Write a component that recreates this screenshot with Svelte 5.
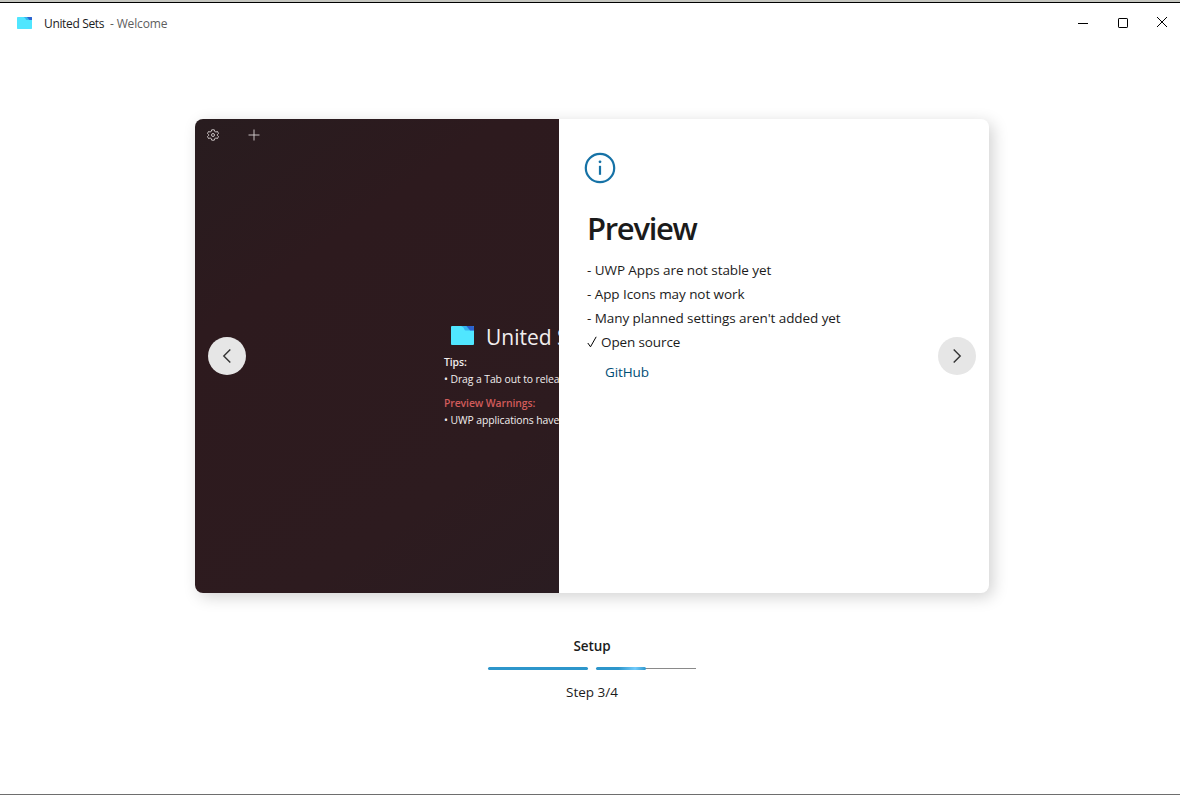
<script>
	let step = $state(3);
	const total = 4;

	const notes = [
		'- UWP Apps are not stable yet',
		'- App Icons may not work',
		"- Many planned settings aren't added yet"
	];

	const prev = () => {
		if (step > 1) step -= 1;
	};
	const next = () => {
		if (step < total) step += 1;
	};

	// two bars, each one covers half of the steps
	let bars = $derived([Math.min(step / 2, 1) * 100, Math.max((step - 2) / 2, 0) * 100]);
</script>

{#snippet folder(w, h)}
	<svg class="folder" width={w} height={h} viewBox="0 0 24 19" preserveAspectRatio="none">
		<rect width="24" height="19" rx="1" fill="#50e6ff" />
		<path d="M10.5 0H23a1 1 0 0 1 1 1v3.6h-8.5c-1.6 0-1.6-1.8-2.6-3z" fill="#35b4ef" />
		<path d="M16 0h7a1 1 0 0 1 1 1v3.6h-4z" fill="#2b63cf" />
	</svg>
{/snippet}

<div class="window">
	<header>
		{@render folder(15, 12)}
		<span class="app-name">United Sets</span>
		<span class="page-name">- Welcome</span>
		<div class="controls">
			<button aria-label="Minimize">
				<svg width="12" height="12"><path d="M1 6.5h10" /></svg>
			</button>
			<button aria-label="Maximize">
				<svg width="12" height="12"><rect x="1.5" y="1.5" width="9" height="9" rx="0.6" /></svg>
			</button>
			<button aria-label="Close">
				<svg width="12" height="12"><path d="M1 1l10 10M11 1L1 11" /></svg>
			</button>
		</div>
	</header>

	<main>
		<div class="card">
			<div class="shot">
				<div class="tabs">
					<svg width="12" height="12" viewBox="0 0 12 12">
						<path
							d="M4.7 0.8h2.6l.4 1.6 1.2.6 1.6-.5 1 2-1.2 1.1v.8l1.2 1.1-1 2-1.6-.5-1.2.6-.4 1.6H4.7l-.4-1.6-1.2-.6-1.6.5-1-2 1.2-1.1v-.8L.5 4.5l1-2 1.6.5 1.2-.6z"
						/>
						<circle cx="6" cy="6" r="1.5" />
					</svg>
					<svg width="12" height="12" viewBox="0 0 12 12"><path d="M6 .5v11M.5 6h11" /></svg>
				</div>
				<div class="shot-body">
					<div class="shot-title">
						{@render folder(23, 19)}
						<span>United Sets</span>
					</div>
					<p class="tips">Tips:</p>
					<p>• Drag a Tab out to release</p>
					<p class="warn">Preview Warnings:</p>
					<p>• UWP applications have issues</p>
				</div>
			</div>

			<div class="info">
				<svg class="info-icon" width="32" height="32" viewBox="0 0 32 32">
					<circle cx="16" cy="16" r="14.2" />
					<path d="M16 13.8v9" />
					<circle class="dot" cx="16" cy="9.8" r="1.4" />
				</svg>
				<h1>Preview</h1>
				{#each notes as note}
					<p>{note}</p>
				{/each}
				<p class="open">
					<svg width="10" height="12" viewBox="0 0 10 12"><path d="M.8 7l2.7 3.8L9.2.8" /></svg>
					<span>Open source</span>
				</p>
				<a href="#github">GitHub</a>
			</div>

			<button class="nav left" aria-label="Previous" onclick={prev}>
				<svg width="10" height="16"><path d="M8.3 1.5L1.8 8l6.5 6.5" /></svg>
			</button>
			<button class="nav right" aria-label="Next" onclick={next}>
				<svg width="10" height="16"><path d="M1.7 1.5L8.2 8l-6.5 6.5" /></svg>
			</button>
		</div>

		<div class="setup">Setup</div>
		<div class="bars">
			{#each bars as value}
				<div class="bar">
					<div class="fill" class:active={value < 100} style="width: {value}%"></div>
				</div>
			{/each}
		</div>
		<div class="step">Step {step}/{total}</div>
	</main>
</div>

<style>
	:global(body) {
		margin: 0;
	}

	.window {
		box-sizing: border-box;
		width: 1180px;
		height: 795px;
		overflow: hidden;
		background: #fff;
		border-top: 2px solid #c5c6c0;
		border-bottom: 1px solid #6e6e6e;
		box-shadow: inset 0 1px #000;
		color: #1b1b1b;
		font-family: 'Open Sans', 'Noto Sans', sans-serif;
		font-size: 13.5px;
	}

	button {
		display: flex;
		align-items: center;
		justify-content: center;
		border: none;
		padding: 0;
		background: none;
	}

	svg {
		display: block;
		flex-shrink: 0;
		fill: none;
		stroke: #000;
	}

	.folder {
		stroke: none;
	}

	/* Title bar */
	header {
		display: flex;
		align-items: center;
		height: 42px;
		padding-left: 17px;
		font-size: 12px;
		white-space: nowrap;
	}

	.app-name {
		margin-left: 12px;
		width: 66px;
		letter-spacing: -0.35px;
	}

	.page-name {
		color: #5e5e5e;
		letter-spacing: -0.15px;
	}

	.controls {
		display: flex;
		margin-left: auto;
	}

	.controls button {
		width: 40px;
		height: 40px;
	}

	.controls button:last-child {
		width: 37px;
		height: 38px;
	}

	main {
		display: flex;
		flex-direction: column;
		align-items: center;
		padding: 75px 0 0 4px;
	}

	/* Card */
	.card {
		position: relative;
		display: flex;
		width: 794px;
		height: 474px;
		border-radius: 8px;
		background: #fff;
		box-shadow: 4px 4px 16px rgba(0, 0, 0, 0.18);
	}

	.shot {
		width: 364px;
		overflow: hidden;
		border-radius: 8px 0 0 8px;
		background: linear-gradient(145deg, #281c1f 0%, #2d1a1e 30%, #2d1b1f 75%, #2a1c21 100%);
		color: #f2eeee;
		white-space: nowrap;
	}

	.tabs {
		display: flex;
		gap: 29px;
		padding: 10px 0 0 12px;
	}

	.tabs svg {
		stroke: #d8d2d2;
		stroke-width: 0.9;
	}

	.shot-body {
		padding: 178px 0 0 249px;
		font-size: 10.4px;
		letter-spacing: -0.08px;
	}

	.shot-title {
		display: flex;
		align-items: center;
		gap: 12px;
		height: 35px;
		padding-left: 7px;
		font-size: 21px;
		letter-spacing: 0;
	}

	.shot-title .folder,
	.shot-title :global(svg) {
		margin-bottom: 2px;
	}

	.shot p {
		margin: 0;
		line-height: 18px;
	}

	.shot .tips {
		font-weight: 600;
		line-height: 17px;
	}

	.shot .tips + p {
		line-height: 17px;
	}

	.shot .warn {
		margin-top: 6px;
		color: #d25b5b;
		font-weight: 600;
	}

	.shot .warn + p {
		line-height: 17px;
	}

	.info {
		flex: 1;
		padding: 33px 0 0 28px;
	}

	.info-icon {
		margin-left: -3.5px;
		stroke: #1672a6;
		stroke-width: 2.2;
	}

	.info-icon .dot {
		fill: #1672a6;
		stroke: none;
	}

	h1 {
		margin: 23px 0 8px;
		height: 43px;
		font-size: 31px;
		font-weight: 600;
		line-height: 43px;
		letter-spacing: -1.3px;
	}

	.info p {
		margin: 0;
		height: 24px;
		line-height: 24px;
		letter-spacing: -0.07px;
	}

	.info .open {
		display: flex;
		align-items: center;
		gap: 4px;
		letter-spacing: -0.12px;
	}

	.info a {
		display: block;
		margin: 6px 0 0 18px;
		line-height: 24px;
		color: #004e75;
		letter-spacing: -0.1px;
		text-decoration: none;
	}

	.nav {
		position: absolute;
		top: 218px;
		width: 38px;
		height: 38px;
		border-radius: 50%;
		background: #e6e6e6;
	}

	.nav svg {
		stroke: #333;
		stroke-width: 1.4;
	}

	.left {
		left: 13px;
	}

	.right {
		right: 13px;
	}

	/* Progress */
	.setup {
		margin-top: 43px;
		font-weight: 600;
		line-height: 20px;
		letter-spacing: -0.1px;
	}

	.bars {
		display: flex;
		gap: 8px;
		margin: 11px 0 12px;
	}

	.bar {
		width: 100px;
		height: 3px;
		background: linear-gradient(#8a8a8a, #8a8a8a) center / 100% 1px no-repeat;
	}

	.fill {
		height: 3px;
		border-radius: 2px;
		background: #2d96cb;
	}

	.fill.active {
		background: linear-gradient(100deg, #2d96cb 45%, #72cbfb 78%, #2d96cb 100%);
	}

	.step {
		line-height: 20px;
	}
</style>
